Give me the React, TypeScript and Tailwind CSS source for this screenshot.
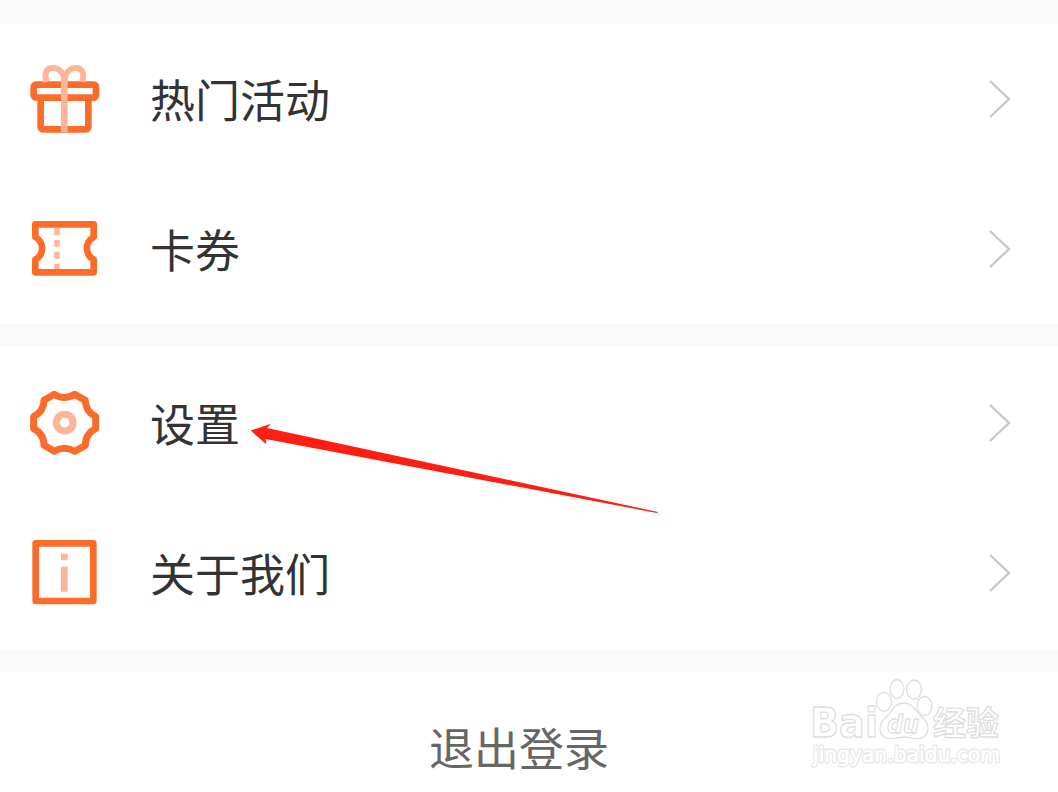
import React from "react";

const GiftIcon = () => (
  <svg viewBox="0 0 270 270" className="size-[90px]" fill="none">
    <rect x="62" y="128" width="143" height="95" rx="7" stroke="#fb6c2a" strokeWidth="20" />
    <rect x="41" y="89" width="187" height="39" rx="7" fill="#fff" stroke="#fb6c2a" strokeWidth="20" />
    <path d="M80 80C72 58 78 39 98 39C120 39 133 56 133 84C133 56 147 39 168 39C188 39 194 58 187 80" stroke="#fdb597" strokeWidth="18" />
    <path d="M133 72V232" stroke="#fdb597" strokeWidth="20" />
  </svg>
);

const TicketIcon = () => (
  <svg viewBox="0 0 270 270" className="size-[90px]" fill="none">
    <path d="M46 58H221V96C194 112 194 148 221 164V202H46V164C73 148 73 112 46 96Z" stroke="#fb6c2a" strokeWidth="20" strokeLinejoin="round" />
    <path d="M111 69V90M111 105V125M111 140V161M111 176V192" stroke="#fdb597" strokeWidth="16" />
  </svg>
);

const GearIcon = () => (
  <svg viewBox="0 0 270 270" className="size-[90px]" fill="none">
    <path d="M103 43Q133 62 164 43L196 61Q196 94 227 110V146Q196 162 196 196L164 214Q133 196 103 214L72 196Q72 162 41 146V110Q72 94 72 61Z" stroke="#fb6c2a" strokeWidth="21" strokeLinejoin="round" />
    <circle cx="134" cy="128" r="25" stroke="#fdb597" strokeWidth="21" />
  </svg>
);

const InfoIcon = () => (
  <svg viewBox="0 0 270 270" className="size-[90px]" fill="none">
    <rect x="47" y="40" width="173" height="173" stroke="#fb6c2a" strokeWidth="20" strokeLinejoin="round" />
    <path d="M133 71V91M133 110V185" stroke="#fdb597" strokeWidth="20" />
  </svg>
);

const Row = ({ icon, label }: { icon: React.ReactNode; label: string }) => (
  <button className="flex h-[150px] w-full items-center pl-5 pr-[46px] text-left">
    {icon}
    <span className="ml-10 flex-1 pb-px text-[45px] leading-none text-[#333]">{label}</span>
    <svg viewBox="0 0 24 42" className="h-[42px] w-6" fill="none">
      <path d="M2 3L21 21L2 39" stroke="#c8c8c8" strokeWidth="2.4" />
    </svg>
  </button>
);

const Watermark = () => (
  <svg
    viewBox="0 0 220 110"
    className="absolute left-[795px] top-[670px] h-[110px] w-[220px]"
    fill="#fff"
    stroke="#dedede"
    strokeWidth="1.3"
    strokeLinejoin="round"
  >
    <g fontFamily="'DejaVu Sans', sans-serif" fontWeight="700">
      <text x="15" y="67" fontSize="41" textLength="68" lengthAdjust="spacingAndGlyphs">Bai</text>
      <ellipse cx="89" cy="32" rx="7.5" ry="9.5" />
      <ellipse cx="102" cy="19" rx="7" ry="9.5" />
      <ellipse cx="119" cy="19.5" rx="7.5" ry="9.5" />
      <ellipse cx="129.5" cy="36" rx="7.5" ry="9.5" />
      <path d="M109 33C101 33 97 40 94 44C90 49 85 51 85 59C85 65 90 69 97 68.5C103 68 106 67 109 67C113 67 117 69 123 68.5C130 68 133 64 133 58C133 51 128 49 124 44C120 39 117 33 109 33Z" />
      <text x="92" y="63" fontSize="25" fontStyle="italic" textLength="32" lengthAdjust="spacingAndGlyphs">du</text>
      <text x="138" y="65" fontSize="33" fontFamily="'Noto Sans CJK SC', sans-serif" textLength="66" lengthAdjust="spacingAndGlyphs">经验</text>
    </g>
    <g fontSize="20.5" fontFamily="'DejaVu Sans', sans-serif">
      <text x="18" y="92" textLength="187" lengthAdjust="spacingAndGlyphs" stroke="#e4e4e4" strokeWidth="2.8">jingyan.baidu.com</text>
      <text x="18" y="92" textLength="187" lengthAdjust="spacingAndGlyphs" stroke="#fff" strokeWidth="0.7">jingyan.baidu.com</text>
    </g>
  </svg>
);

export default function App() {
  return (
    <main className="relative flex h-[792px] w-[1058px] flex-col overflow-hidden bg-[#fafafa] font-['Noto_Sans_CJK_SC',sans-serif]">
      <section className="mt-6 bg-white">
        <Row icon={<div className="mt-0.5"><GiftIcon /></div>} label="热门活动" />
        <Row icon={<div className="mt-0.5"><TicketIcon /></div>} label="卡券" />
      </section>
      <section className="mt-[23px] bg-white pb-px pt-px">
        <Row icon={<div className="mt-1"><GearIcon /></div>} label="设置" />
        <Row icon={<div className="mt-1"><InfoIcon /></div>} label="关于我们" />
      </section>
      <button className="mt-[23px] flex-1 bg-white pl-[429px] pt-[52px] text-left text-[45px] leading-none text-[#666]">
        <span className="block h-full">退出登录</span>
      </button>
      <svg viewBox="0 0 430 110" className="absolute left-60 top-[410px] h-[110px] w-[430px]">
        <path d="M10.7 20.5L31 13.8L27 18L418 102L417 103L25.5 29L26.3 34.3Z" fill="#ff1f12" />
      </svg>
      <Watermark />
    </main>
  );
}
